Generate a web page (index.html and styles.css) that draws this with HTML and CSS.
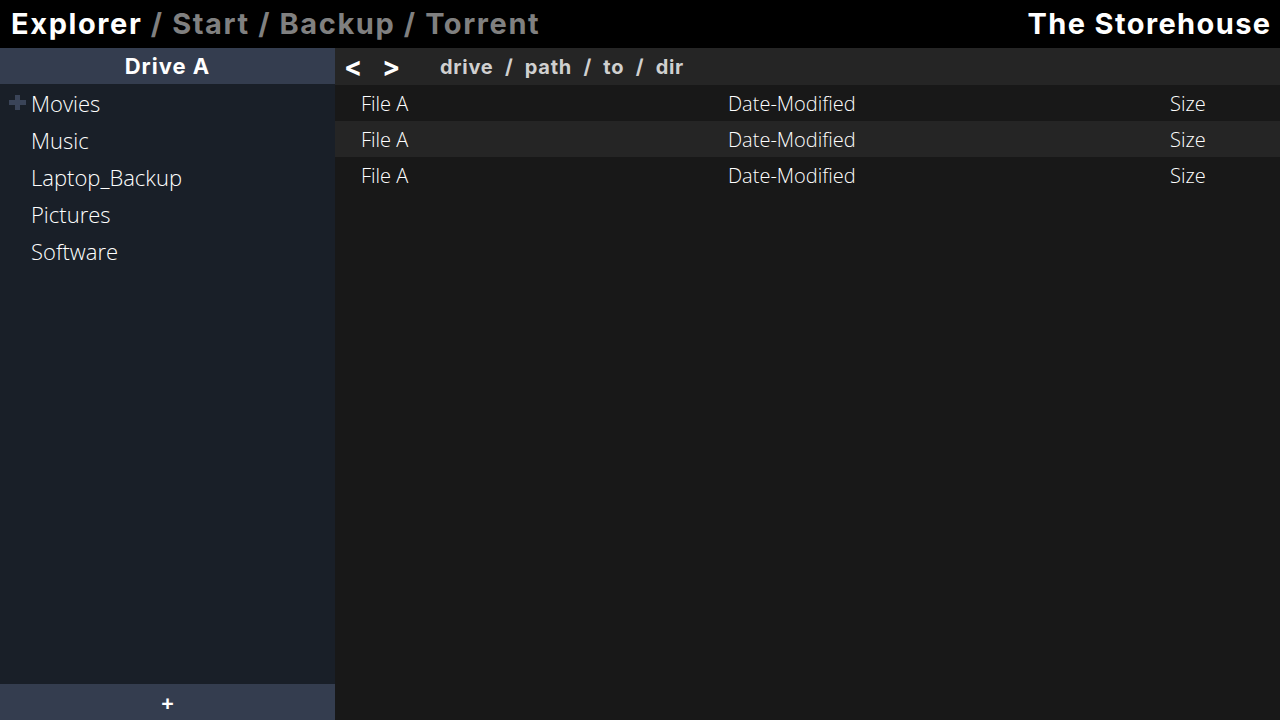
FILE: index.html
```html
<!DOCTYPE html>
<html>
<head>
<meta charset="utf-8">
<link rel="stylesheet" href="styles.css">
</head>
<body>
<header class="topbar">
  <div class="crumbs"><span class="crumb-current">Explorer</span><span class="crumb-rest"> / Start / Backup / Torrent</span></div>
  <div class="brand">The Storehouse</div>
</header>
<div class="body">
  <aside class="sidebar">
    <div class="drive">Drive A</div>
    <ul class="tree">
      <li class="tree-item"><span class="expander"><svg width="17" height="15" viewBox="0 0 17 15"><path d="M6 0h5v5h6v5h-6v5h-5v-5h-6v-5h6z" fill="#3a4458"/></svg></span>Movies</li>
      <li class="tree-item"><span class="expander"></span>Music</li>
      <li class="tree-item"><span class="expander"></span>Laptop_Backup</li>
      <li class="tree-item"><span class="expander"></span>Pictures</li>
      <li class="tree-item"><span class="expander"></span>Software</li>
    </ul>
    <div class="add">+</div>
  </aside>
  <main class="main">
    <div class="nav">
      <span class="nav-btn">&lt;</span>
      <span class="nav-btn">&gt;</span>
      <span class="path"><span>drive</span><span>/</span><span>path</span><span>/</span><span>to</span><span>/</span><span>dir</span></span>
    </div>
    <div class="rows">
      <div class="row"><span class="c-name">File A</span><span class="c-date">Date-Modified</span><span class="c-size">Size</span></div>
      <div class="row alt"><span class="c-name">File A</span><span class="c-date">Date-Modified</span><span class="c-size">Size</span></div>
      <div class="row"><span class="c-name">File A</span><span class="c-date">Date-Modified</span><span class="c-size">Size</span></div>
    </div>
  </main>
</div>
</body>
</html>
```
FILE: styles.css
```css
* { box-sizing: border-box; }
html, body { margin: 0; padding: 0; height: 100%; }
body {
  background: #181818;
  color: #fff;
  font-family: "Open Sans", sans-serif;
  overflow: hidden;
  display: flex;
  flex-direction: column;
}
.topbar {
  height: 48px;
  background: #000;
  display: flex;
  align-items: center;
  justify-content: space-between;
  padding: 0 10px 1px 11px;
  font-family: "Inter", sans-serif;
  font-weight: 700;
  font-size: 29px;
  letter-spacing: 1.6px;
  white-space: nowrap;
}
.crumb-current { color: #fff; }
.crumb-rest { color: #808080; }
.brand { color: #fff; margin-right: -1.5px; letter-spacing: 1.4px; }
.body {
  flex: 1;
  display: flex;
  min-height: 0;
}
.sidebar {
  width: 335px;
  background: #191f28;
  display: flex;
  flex-direction: column;
}
.drive {
  height: 36px;
  background: #343d4f;
  display: flex;
  align-items: center;
  justify-content: center;
  font-family: "Inter", sans-serif;
  font-weight: 700;
  font-size: 22px;
  letter-spacing: 1px;
}
.tree {
  list-style: none;
  margin: 0;
  padding: 0;
  flex: 1;
}
.tree-item {
  height: 37px;
  display: flex;
  align-items: center;
  font-weight: 300;
  font-size: 22px;
  color: #fff;
  padding-left: 9px;
}
.expander {
  width: 22px;
  display: flex;
  align-items: center;
}
.add {
  height: 36px;
  background: #343d4f;
  display: flex;
  align-items: center;
  justify-content: center;
  font-weight: 700;
  font-size: 22px;
}
.main {
  flex: 1;
  display: flex;
  flex-direction: column;
}
.nav {
  height: 37px;
  background: #252525;
  display: flex;
  align-items: center;
  padding-left: 9px;
  font-family: "Inter", sans-serif;
  font-weight: 700;
}
.nav-btn {
  font-size: 27px;
  color: #fff;
  width: 38px;
  margin-top: -1px;
}
.path {
  margin-left: 20px;
  font-size: 20px;
  letter-spacing: 0.7px;
  color: #d0d0d0;
  display: flex;
  gap: 11.5px;
}
.row {
  height: 36px;
  display: flex;
  align-items: center;
  font-weight: 300;
  font-size: 20px;
  color: #fff;
}
.row.alt { background: #252525; }
.c-name { width: 393px; padding-left: 26px; }
.c-date { width: 442px; }
.c-size { }
```
